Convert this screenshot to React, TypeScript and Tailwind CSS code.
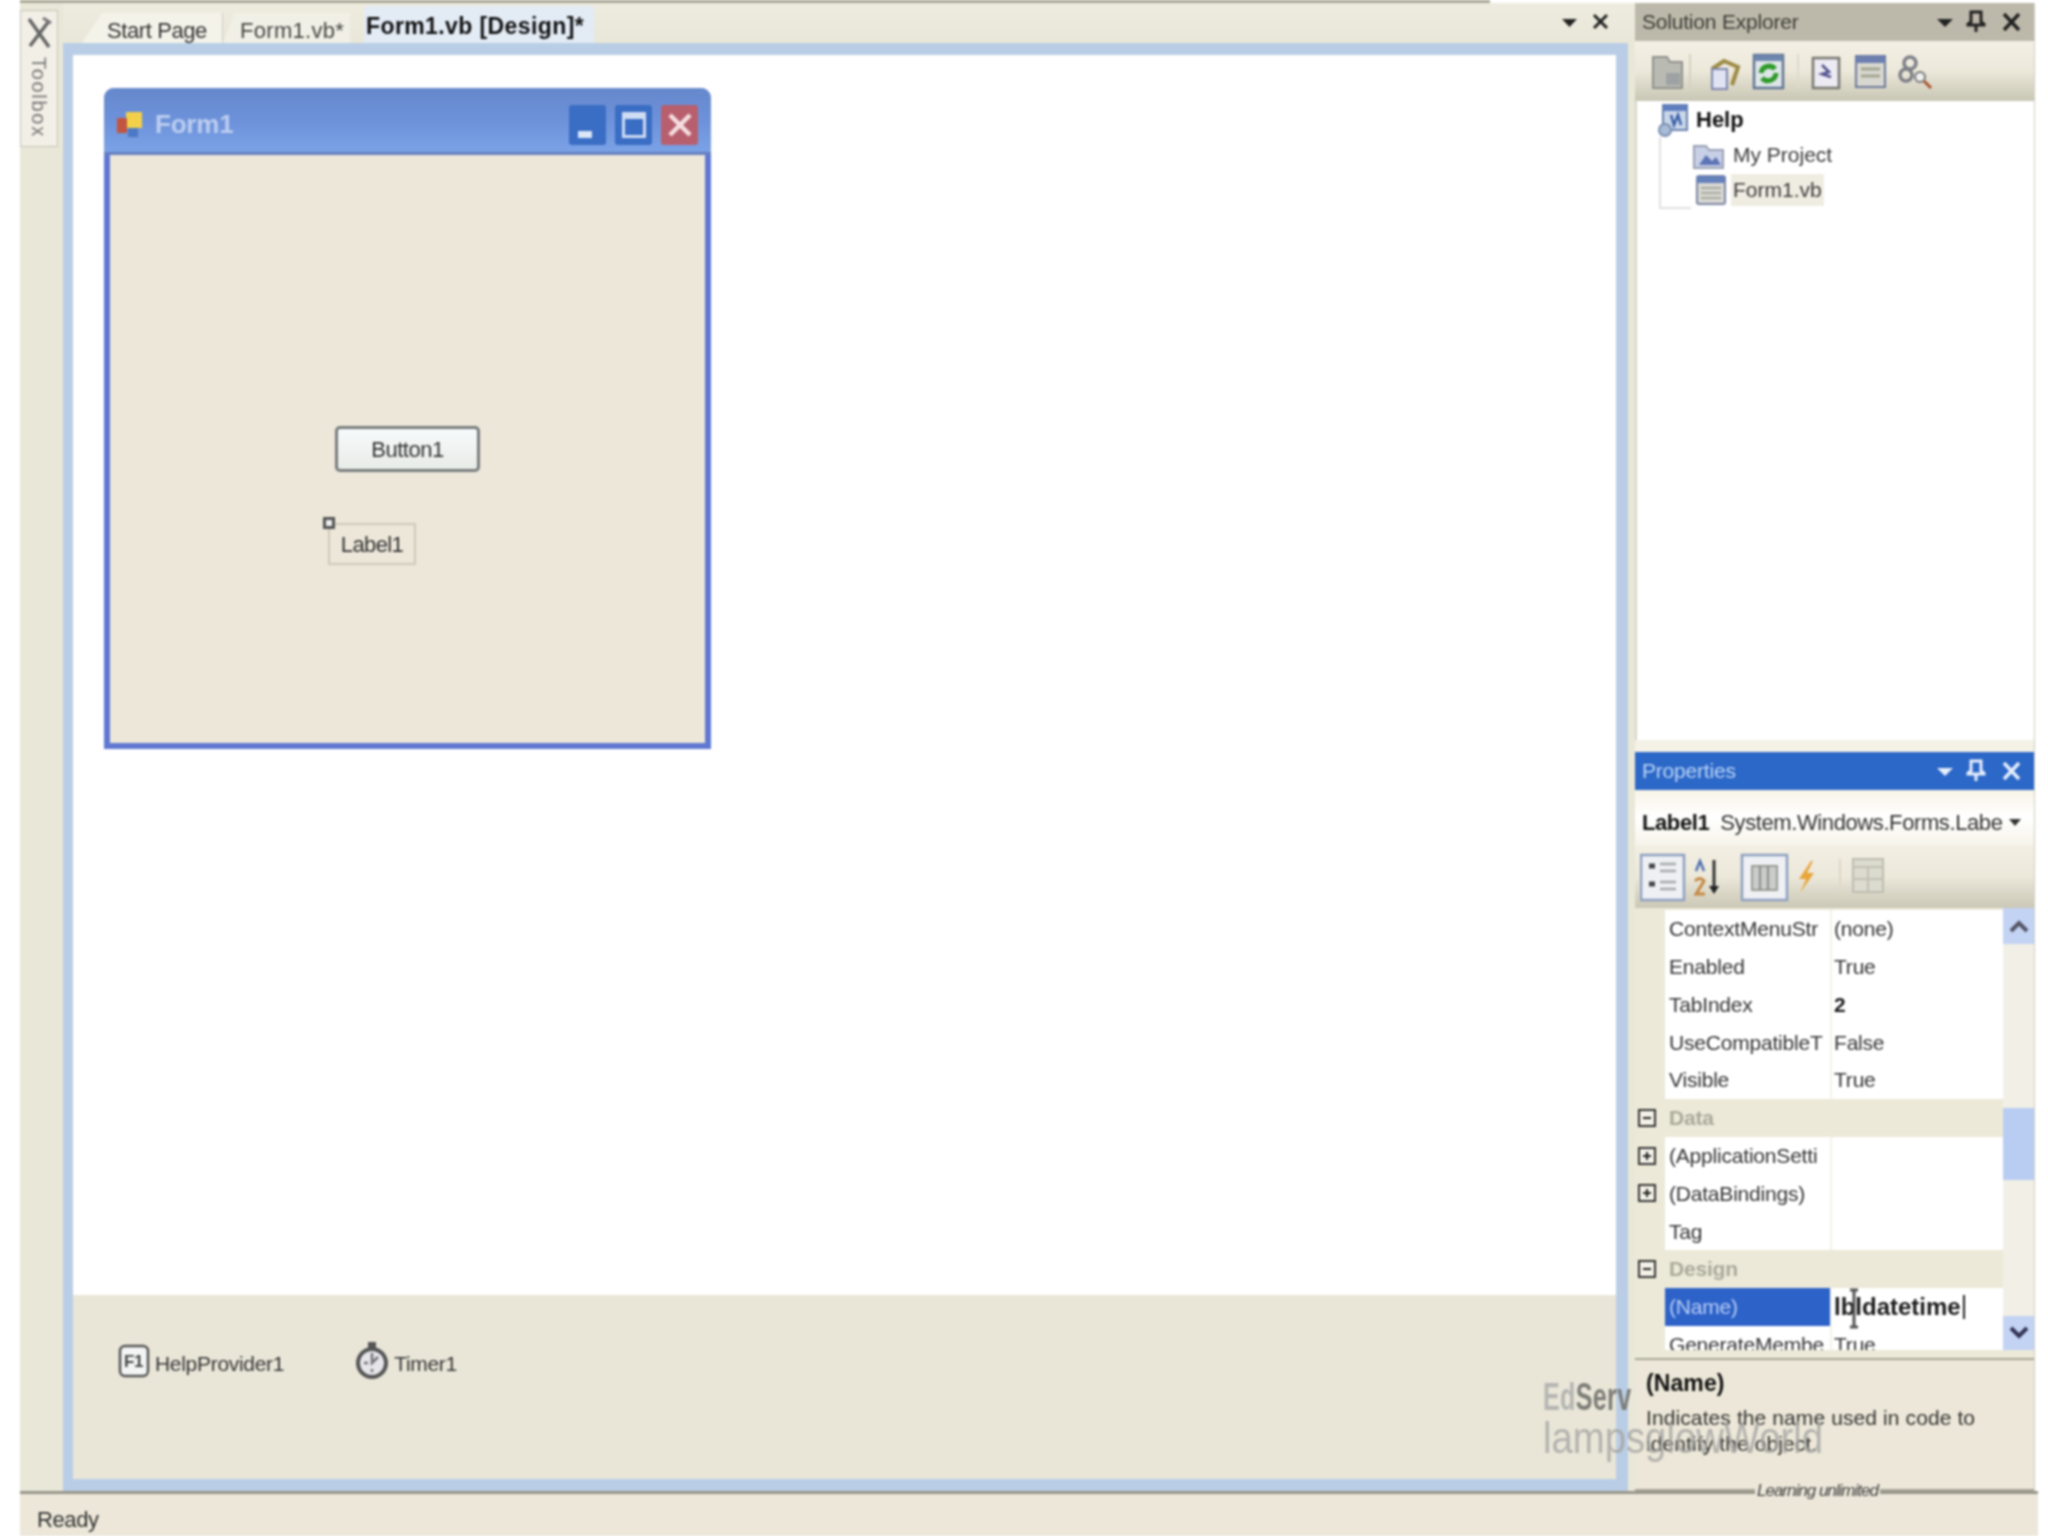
import { ReactNode } from "react"

const props = [
  { name: "ContextMenuStr", value: "(none)" },
  { name: "Enabled", value: "True" },
  { name: "TabIndex", value: "2", bold: true },
  { name: "UseCompatibleT", value: "False" },
  { name: "Visible", value: "True" },
  { name: "Data", category: true },
  { name: "(ApplicationSetti", value: "", plus: true },
  { name: "(DataBindings)", value: "", plus: true },
  { name: "Tag", value: "" },
  { name: "Design", category: true },
  { name: "(Name)", value: "lbldatetime", selected: true, bold: true },
  { name: "GenerateMembe", value: "True" },
]

function Box({ minus }: { minus?: boolean }) {
  return (
    <svg width="20" height="20" viewBox="0 0 20 20" className="shrink-0">
      <rect x="2" y="2" width="16" height="16" fill="#f4f2e8" stroke="#333" strokeWidth="2" />
      <path d={minus ? "M6 10h8" : "M6 10h8M10 6v8"} stroke="#222" strokeWidth="2" />
    </svg>
  )
}

function PanelTitle({ title, active }: { title: string; active?: boolean }) {
  const color = active ? "#e6eefc" : "#222"
  return (
    <div className={`h-[38px] shrink-0 flex items-center pl-[7px] pr-[10px] text-[21px] tracking-[-0.2px] ${active ? "bg-[#2c68c8] text-[#bcd4f6]" : "bg-[#bdb9aa] text-[#3a3a36]"}`}>
      <span className="flex-1">{title}</span>
      <svg width="120" height="30" viewBox="0 0 120 30">
        <path d="M33 12h16l-8 8z" fill={color} />
        <path d="M67 5h10v10l3 2v1H64v-1l3-2zM72 18v7" fill="none" stroke={color} strokeWidth="3" />
        <path d="M100 7l15 16M115 7l-15 16" stroke={color} strokeWidth="3.500" />
      </svg>
    </div>
  )
}

function WinBtn({ bg, children }: { bg: string; children: ReactNode }) {
  return (
    <div className={`w-[37px] h-[40px] rounded-[3px] flex items-center justify-center ${bg}`}>{children}</div>
  )
}

function SolutionToolbar() {
  return (
    <div className="h-[60px] shrink-0 flex items-center pl-[17px] bg-gradient-to-b from-[#f4f0e6] via-[#ece8da] to-[#c8c6b4]">
      <svg width="300" height="40" viewBox="0 0 300 40">
        <path d="M1 6h14l3 5h12v26H1z" fill="#b9bbb3" stroke="#8f918c" strokeWidth="2" />
        <rect x="14" y="22" width="14" height="12" fill="#9ea2a2" />
        <path d="M38 3v34" stroke="#d5d2c2" strokeWidth="2" />
        <path d="M60 18l12-8 14 6-6 18" fill="none" stroke="#9c8a45" strokeWidth="4" />
        <rect x="60" y="18" width="15" height="20" fill="#dfe3f2" stroke="#7f87ad" strokeWidth="2" />
        <rect x="102" y="4" width="29" height="33" fill="#dfe6e8" stroke="#5f7391" strokeWidth="2.500" />
        <rect x="102" y="4" width="29" height="6" fill="#6d86ad" />
        <path d="M109 22a8 8 0 0 1 14-4M124 22a8 8 0 0 1-14 5" fill="none" stroke="#2f9a2a" strokeWidth="5" />
        <path d="M146 3v34" stroke="#dedbcc" strokeWidth="2" />
        <rect x="161" y="7" width="26" height="30" fill="#eceaf2" stroke="#77776f" strokeWidth="2.500" />
        <path d="M170 14l7 7-7 2 9 3" fill="none" stroke="#50508f" strokeWidth="2.500" />
        <rect x="204" y="5" width="29" height="31" fill="#d8d8d0" stroke="#6d7a99" strokeWidth="2" />
        <rect x="204" y="5" width="29" height="7" fill="#6d7fb0" />
        <path d="M209 18h19M209 25h19" stroke="#a5a692" strokeWidth="3" />
        <circle cx="258" cy="12" r="6" fill="none" stroke="#7d8087" strokeWidth="3.500" />
        <circle cx="254" cy="24" r="6" fill="none" stroke="#7d8087" strokeWidth="3.500" />
        <circle cx="268" cy="26" r="5" fill="#eef0f2" stroke="#777" strokeWidth="2" />
        <path d="M272 30l7 7" stroke="#a8552f" strokeWidth="3" />
      </svg>
    </div>
  )
}

function SolutionTree() {
  return (
    <div className="flex-1 bg-white border-l-[2px] border-[#d8d6c8] text-[21px] text-[#3a3a3a] relative">
      <div className="flex items-center h-[37px] pl-[20px]">
        <svg width="32" height="34" viewBox="0 0 32 34" className="shrink-0">
          <rect x="6" y="2" width="24" height="25" fill="#c9d6ea" stroke="#6a82ad" strokeWidth="2" />
          <rect x="6" y="2" width="24" height="6" fill="#5f7fc0" />
          <path d="M14 12l3 10 4-10 3 10" fill="none" stroke="#3a5fa8" strokeWidth="2.500" />
          <circle cx="8" cy="27" r="6" fill="#a8bcd8" stroke="#7a8fb0" strokeWidth="2" />
        </svg>
        <span className="ml-[7px] font-bold text-[#111] text-[22px]">Help</span>
      </div>
      <div className="flex items-center h-[34px] pl-[56px]">
        <svg width="32" height="28" viewBox="0 0 32 28" className="shrink-0">
          <path d="M1 5h12l3 4h14v18H1z" fill="#c8d0e6" stroke="#9aa0b4" strokeWidth="2" />
          <path d="M6 24l7-10 6 6 4-4 5 8z" fill="#5d74b6" />
        </svg>
        <span className="ml-[8px]">My Project</span>
      </div>
      <div className="flex items-center h-[36px] pl-[58px]">
        <svg width="32" height="32" viewBox="0 0 32 32" className="shrink-0">
          <rect x="2" y="2" width="28" height="28" rx="2" fill="#d8d8d4" stroke="#7c86a0" strokeWidth="2" />
          <rect x="2" y="2" width="28" height="7" fill="#6481bb" />
          <path d="M6 14h20M6 19h20M6 24h20" stroke="#a9a99e" strokeWidth="2" />
        </svg>
        <span className="ml-[4px] px-[2px] bg-[#efede2]">Form1.vb</span>
      </div>
      <div className="absolute left-[22px] top-[36px] w-[32px] h-[72px] border-l-[2px] border-b-[2px] border-[#e0e0e0]" />
    </div>
  )
}

function PropertiesToolbar() {
  return (
    <div className="h-[63px] shrink-0 flex items-center pl-[5px] pt-[3px] bg-gradient-to-b from-[#f3efe4] via-[#ece8da] to-[#cbc8b6]">
      <svg width="260" height="50" viewBox="0 0 260 50">
        <rect x="1" y="2" width="43" height="45" fill="#eef0f4" stroke="#8da0c0" strokeWidth="2.500" />
        <path d="M9 13h6M9 31h6" stroke="#444" strokeWidth="5" />
        <path d="M20 11h16M20 18h16M20 29h16M20 36h16" stroke="#a5a9a8" strokeWidth="2.500" />
        <path d="M56 18l4-10 4 10" fill="none" stroke="#4f6fb0" strokeWidth="2.500" />
        <path d="M55 28q5-5 9 0l-8 13h9" fill="none" stroke="#c58a45" strokeWidth="3" />
        <path d="M74 7v30" stroke="#333" strokeWidth="3" />
        <path d="M69 33h10l-5 8z" fill="#222" />
        <rect x="102" y="2" width="45" height="45" fill="#eef0f4" stroke="#8da0c0" strokeWidth="2.500" />
        <rect x="112" y="13" width="25" height="24" fill="#c9ccc9" stroke="#9a9c94" strokeWidth="2" />
        <path d="M120 13v24M128 13v24" stroke="#8b8e88" strokeWidth="2" />
        <path d="M171 8l-12 18h7l-6 14 14-20h-7l6-12z" fill="#e8a53a" />
        <path d="M200 6v34" stroke="#dbd8c8" strokeWidth="2" />
        <rect x="213" y="6" width="30" height="33" fill="#dcdbd0" stroke="#bdbcb0" strokeWidth="2" />
        <path d="M213 14h30M228 14v25M213 26h30" stroke="#c0bfb2" strokeWidth="2" />
      </svg>
    </div>
  )
}

function PropertyGrid() {
  return (
    <div className="h-[442px] shrink-0 flex overflow-hidden bg-[#ece9d8]">
      <div className="w-[368px] shrink-0 pt-[2px] text-[21px] tracking-[-0.2px] text-[#333]">
        {props.map((p) =>
          p.category ? (
            <div key={p.name} className="h-[37.8px] flex items-center pl-[2px]">
              <Box minus />
              <span className="ml-[12px] font-bold text-[#aaa99a]">{p.name}</span>
            </div>
          ) : (
            <div key={p.name} className="h-[37.8px] flex items-center pl-[2px]">
              <div className="w-[28px] shrink-0">{p.plus && <Box />}</div>
              <div className={`w-[165px] shrink-0 h-full flex items-center pl-[4px] overflow-hidden whitespace-nowrap ${p.selected ? "bg-[#2d62c8] text-[#b8cdf5]" : "bg-white"}`}>
                {p.name}
              </div>
              <div className={`flex-1 h-full flex items-center pl-[2px] bg-white border-l-[2px] border-[#f3f2ea] ${p.bold ? "font-bold text-[#1a1a1a]" : ""} ${p.selected ? "text-[24px] tracking-[0px]" : ""}`}>
                {p.value}
                {p.selected && <span className="w-[2px] h-[24px] bg-[#222] ml-[2px]" />}
              </div>
            </div>
          ),
        )}
      </div>
      <div className="flex-1 flex flex-col bg-[#f2f0e6]">
        <div className="h-[36px] bg-[#c3d3f3] flex items-center justify-center">
          <svg width="20" height="14" viewBox="0 0 20 14"><path d="M2 12l8-8 8 8" fill="none" stroke="#556" strokeWidth="4" /></svg>
        </div>
        <div className="h-[164px]" />
        <div className="h-[72px] bg-[#b9cdf2]" />
        <div className="flex-1" />
        <div className="h-[34px] bg-[#c3d3f3] flex items-center justify-center">
          <svg width="20" height="14" viewBox="0 0 20 14"><path d="M2 2l8 8 8-8" fill="none" stroke="#335" strokeWidth="4" /></svg>
        </div>
      </div>
    </div>
  )
}

export default function App() {
  return (
    <div className="relative w-[2048px] h-[1536px] bg-white overflow-hidden blur-[0.9px] font-['Liberation_Sans',sans-serif]">
      <div className="ml-[20px] w-[1470px] h-[3px] bg-[#a9a795]" />
      <div className="ml-[20px] w-[2015px] flex h-[1488px] bg-[#e9e7d8]">
        <div className="w-[43px] shrink-0">
          <div className="mt-[7px] w-[38px] h-[137px] bg-[#f1efe6] border border-[#c6c4b6] flex flex-col items-center pt-[5px]">
            <svg width="28" height="34" viewBox="0 0 28 34">
              <path d="M4 3l20 28M24 5L5 30" stroke="#666" strokeWidth="3.500" />
              <path d="M18 2l8 5" stroke="#777" strokeWidth="3" />
            </svg>
            <span className="[writing-mode:vertical-rl] text-[20px] tracking-[1.700px] text-[#777] mt-[7px]">Toolbox</span>
          </div>
        </div>
        <div className="w-[1572px] shrink-0 flex flex-col">
          <div className="h-[40px] shrink-0 flex items-end text-[22px] tracking-[-0.4px] bg-gradient-to-b from-[#eeecdf] to-[#e9e7d8]">
            <div className="ml-[19px] w-[141px] h-[30px] flex items-center pl-[25px] pt-[4px] bg-[#f4f3ea] border-r border-[#cfcdc0] text-[#333] [clip-path:polygon(0_100%,20px_0,100%_0,100%_100%)]">Start Page</div>
            <div className="w-[127px] h-[30px] flex items-center pl-[17px] pt-[4px] tracking-[0.3px] bg-[#f1f0e6] text-[#444] [clip-path:polygon(0_100%,12px_0,100%_0,100%_100%)]">Form1.vb*</div>
            <div className="ml-[14px] w-[230px] h-[37px] flex items-center pl-[2px] pt-[3px] bg-[#e3ebf5] rounded-t-[4px] text-[23px] font-bold text-[#111] tracking-[0.4px] whitespace-nowrap">Form1.vb [Design]*</div>
            <svg width="60" height="30" viewBox="0 0 60 30" className="ml-auto mr-[14px] self-center">
              <path d="M1 11h15l-7.500 8z" fill="#222" />
              <path d="M33 7l13 13M46 7L33 20" stroke="#222" strokeWidth="3" />
            </svg>
          </div>
          <div className="w-[1565px] h-[1448px] border-t-[12px] border-l-[10px] border-r-[12px] border-b-[12px] border-[#b9cee6] bg-white flex flex-col">
            <div className="h-[1240px] shrink-0 bg-white pt-[33px] pl-[31px]">
              <div className="w-[607px] h-[661px] rounded-t-[10px] border-[6px] border-t-0 border-[#6078d2] bg-[#ede7da] flex flex-col">
                <div className="h-[67px] -mx-[6px] shrink-0 rounded-t-[10px] bg-gradient-to-b from-[#6688cc] via-[#6d92da] to-[#7ba2e6] flex items-center pl-[12px] pr-[13px] pt-[9px] border-b-[3px] border-[#6580c0]">
                  <svg width="28" height="30" viewBox="0 0 28 30">
                    <rect x="10" y="2" width="16" height="16" fill="#f2d04a" />
                    <rect x="1" y="8" width="10" height="15" fill="#c2553f" />
                    <rect x="12" y="18" width="10" height="9" fill="#4c79c4" />
                  </svg>
                  <span className="ml-[11px] flex-1 text-[26px] font-bold tracking-[-0.2px] text-[#bccdf0]">Form1</span>
                  <div className="flex gap-[9px]">
                    <WinBtn bg="bg-[#3a6dc4]"><div className="w-[14px] h-[7px] bg-[#dbe6f8] mt-[20px] -ml-[6px]" /></WinBtn>
                    <WinBtn bg="bg-[#3a6dc4]"><div className="w-[24px] h-[26px] border-[3px] border-t-[7px] border-[#cfdcf4]" /></WinBtn>
                    <WinBtn bg="bg-[#b85f6e]">
                      <svg width="26" height="26" viewBox="0 0 26 26"><path d="M3 3l20 20M23 3L3 23" stroke="#f4dfe0" strokeWidth="4.500" /></svg>
                    </WinBtn>
                  </div>
                </div>
                <div className="pl-[225px] pt-[271px]">
                  <div className="w-[145px] h-[46px] rounded-[5px] border-[3px] border-[#777d7c] bg-gradient-to-b from-[#f7fafb] to-[#e8ece8] flex items-center justify-center text-[22px] tracking-[-0.5px] text-[#333]">Button1</div>
                </div>
                <div className="relative ml-[218px] mt-[51px] w-[88px] h-[42px] border-2 border-[#cfc9b8] flex items-center justify-center text-[22px] tracking-[-0.6px] text-[#333]">
                  Label1
                  <div className="absolute -left-[7px] -top-[8px] w-[12px] h-[12px] border-[3px] border-[#555] bg-[#eee]" />
                </div>
              </div>
            </div>
            <div className="flex-1 bg-[#e9e6d8] flex items-start pt-[49px] pl-[45px] text-[21px] tracking-[-0.3px] text-[#333]">
              <svg width="32" height="34" viewBox="0 0 32 34">
                <rect x="2" y="2" width="28" height="30" rx="5" fill="#f3f4f4" stroke="#555" strokeWidth="2.500" />
                <text x="6" y="23" fontSize="17" fontFamily="Liberation Sans" fontWeight="bold" fill="#444">F1</text>
              </svg>
              <span className="ml-[5px] mt-[4px]">HelpProvider1</span>
              <svg width="34" height="40" viewBox="0 0 34 40" className="ml-[71px] -mt-[3px]">
                <rect x="13" y="1" width="8" height="6" fill="#555" />
                <circle cx="17" cy="22" r="14" fill="#e5e5ea" stroke="#555" strokeWidth="4" />
                <path d="M17 12v10l6-6M9 22h4M17 28v3" stroke="#777" strokeWidth="2.500" fill="none" />
              </svg>
              <span className="ml-[5px] mt-[4px]">Timer1</span>
            </div>
          </div>
        </div>
        <div className="w-[400px] shrink-0 flex flex-col bg-[#ece9d8] border-r border-[#cfcdc0]">
          <div className="h-[737px] shrink-0 flex flex-col">
            <PanelTitle title="Solution Explorer" />
            <SolutionToolbar />
            <SolutionTree />
          </div>
          <div className="h-[12px] shrink-0 bg-[#f4f2e6]" />
          <PanelTitle title="Properties" active />
          <div className="h-[55px] shrink-0 flex items-center pl-[7px] pr-[12px] pt-[9px] bg-gradient-to-b from-[#f7f4e8] via-white to-[#f6f4ea] text-[22px] tracking-[-0.4px] text-[#333] whitespace-nowrap">
            <span className="font-bold text-[#111]">Label1</span>
            <span className="ml-[11px] flex-1 overflow-hidden">System.Windows.Forms.Labe</span>
            <svg width="14" height="10" viewBox="0 0 14 10"><path d="M1 2h12L7 9z" fill="#333" /></svg>
          </div>
          <PropertiesToolbar />
          <PropertyGrid />
          <div className="flex-1 border-t-[2px] border-[#a8a696] mt-[8px] pt-[10px] pl-[11px] pr-[6px] text-[21px] leading-[26px] tracking-[0.1px] text-[#333] bg-[#ece7d8] border-b-[2px]">
            <div className="font-bold text-[#111] text-[23px]">(Name)</div>
            <div className="mt-[9px] whitespace-nowrap">Indicates the name used in code to</div>
            <div>identify the object.</div>
          </div>
        </div>
      </div>
      <div className="ml-[20px] w-[2018px] h-[45px] bg-[#ece7d9] border-t-[3px] border-[#98968a] flex items-center pl-[17px] pt-[9px] text-[22px] tracking-[-0.4px] text-[#333]">Ready</div>

      <div className="absolute left-[1543px] top-[1378px] text-[38px] font-bold leading-none tracking-[0.5px] text-[#7d7d78] scale-x-[0.66] origin-left whitespace-nowrap">
        <span className="text-[#b5b5b2]">Ed</span>Serv
      </div>
      <div className="absolute left-[1543px] top-[1416px] text-[44px] leading-none text-[#a5a5a2]/80 whitespace-nowrap scale-x-[0.87] origin-left">lampsglowWorld</div>
      <div className="absolute left-[1755px] top-[1478px] px-[2px] bg-[#ece7d9] text-[17px] italic tracking-[-1px] text-[#444]">Learning unlimited</div>
      <svg width="40" height="60" viewBox="0 0 40 60" className="absolute left-[1838px] top-[1280px]">
        <path d="M12 10h8M12 47h8M16 10v37" stroke="#555" strokeWidth="3" fill="none" />
      </svg>
    </div>
  )
}
